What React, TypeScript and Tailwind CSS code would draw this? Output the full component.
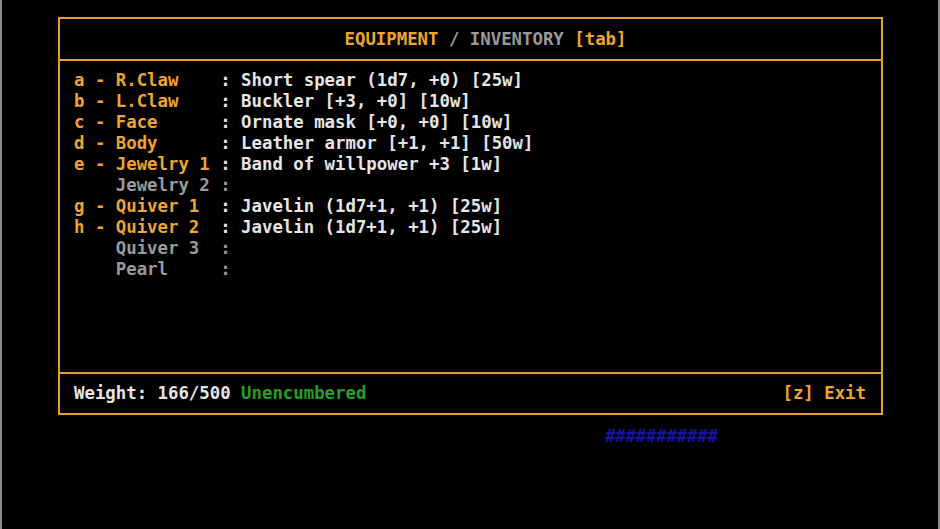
import type { ReactNode } from 'react';

type Slot = { key?: string; name: string; item?: string };

const slots: Slot[] = [
  { key: 'a', name: 'R.Claw', item: 'Short spear (1d7, +0) [25w]' },
  { key: 'b', name: 'L.Claw', item: 'Buckler [+3, +0] [10w]' },
  { key: 'c', name: 'Face', item: 'Ornate mask [+0, +0] [10w]' },
  { key: 'd', name: 'Body', item: 'Leather armor [+1, +1] [50w]' },
  { key: 'e', name: 'Jewelry 1', item: 'Band of willpower +3 [1w]' },
  { name: 'Jewelry 2' },
  { key: 'g', name: 'Quiver 1', item: 'Javelin (1d7+1, +1) [25w]' },
  { key: 'h', name: 'Quiver 2', item: 'Javelin (1d7+1, +1) [25w]' },
  { name: 'Quiver 3' },
  { name: 'Pearl' },
];

const font = "font-['DejaVu_Sans_Mono','Liberation_Mono',monospace] font-bold text-[17.35px] leading-[21px] whitespace-pre";

function Row({ s }: { s: Slot }): ReactNode {
  const label = s.name.padEnd(10, ' ');
  if (!s.key) {
    return (
      <div className="text-[#9a9a9a]">
        {'    ' + label}<span>{':'}</span>
      </div>
    );
  }
  return (
    <div>
      <span className="text-[#f0a530]">{s.key + ' - ' + label}</span>
      <span className="text-[#e6e6e6]">{': ' + s.item}</span>
    </div>
  );
}

export default function App() {
  return (
    <div className={`h-[529px] w-[940px] bg-black border-x-2 border-[#8a8a8a] overflow-hidden ${font}`}>
      <div className="ml-[56px] mt-[17px] w-[825px] border-2 border-[#e0a030] flex flex-col">
        <div className="h-[42px] flex items-center justify-center pl-[30px] border-b-2 border-[#e0a030]">
          <span className="text-[#f0a530]">EQUIPMENT</span>
          <span className="text-[#9a9a9a]">{' / INVENTORY '}</span>
          <span className="text-[#f0a530]">[tab]</span>
        </div>
        <div className="h-[311px] pt-[9px] pl-[14px]">
          {slots.map(s => <Row key={s.name} s={s} />)}
        </div>
        <div className="h-[41px] flex items-center justify-between pl-[14px] pr-[15px] border-t-2 border-[#e0a030]">
          <div>
            <span className="text-[#e6e6e6]">Weight: 166/500 </span>
            <span className="text-[#22a022]">Unencumbered</span>
          </div>
          <span className="text-[#f0a530]">[z] Exit</span>
        </div>
      </div>
      <div className="ml-[603px] mt-[11px] text-[#1414a0] tracking-[-0.2px]">###########</div>
    </div>
  );
}
